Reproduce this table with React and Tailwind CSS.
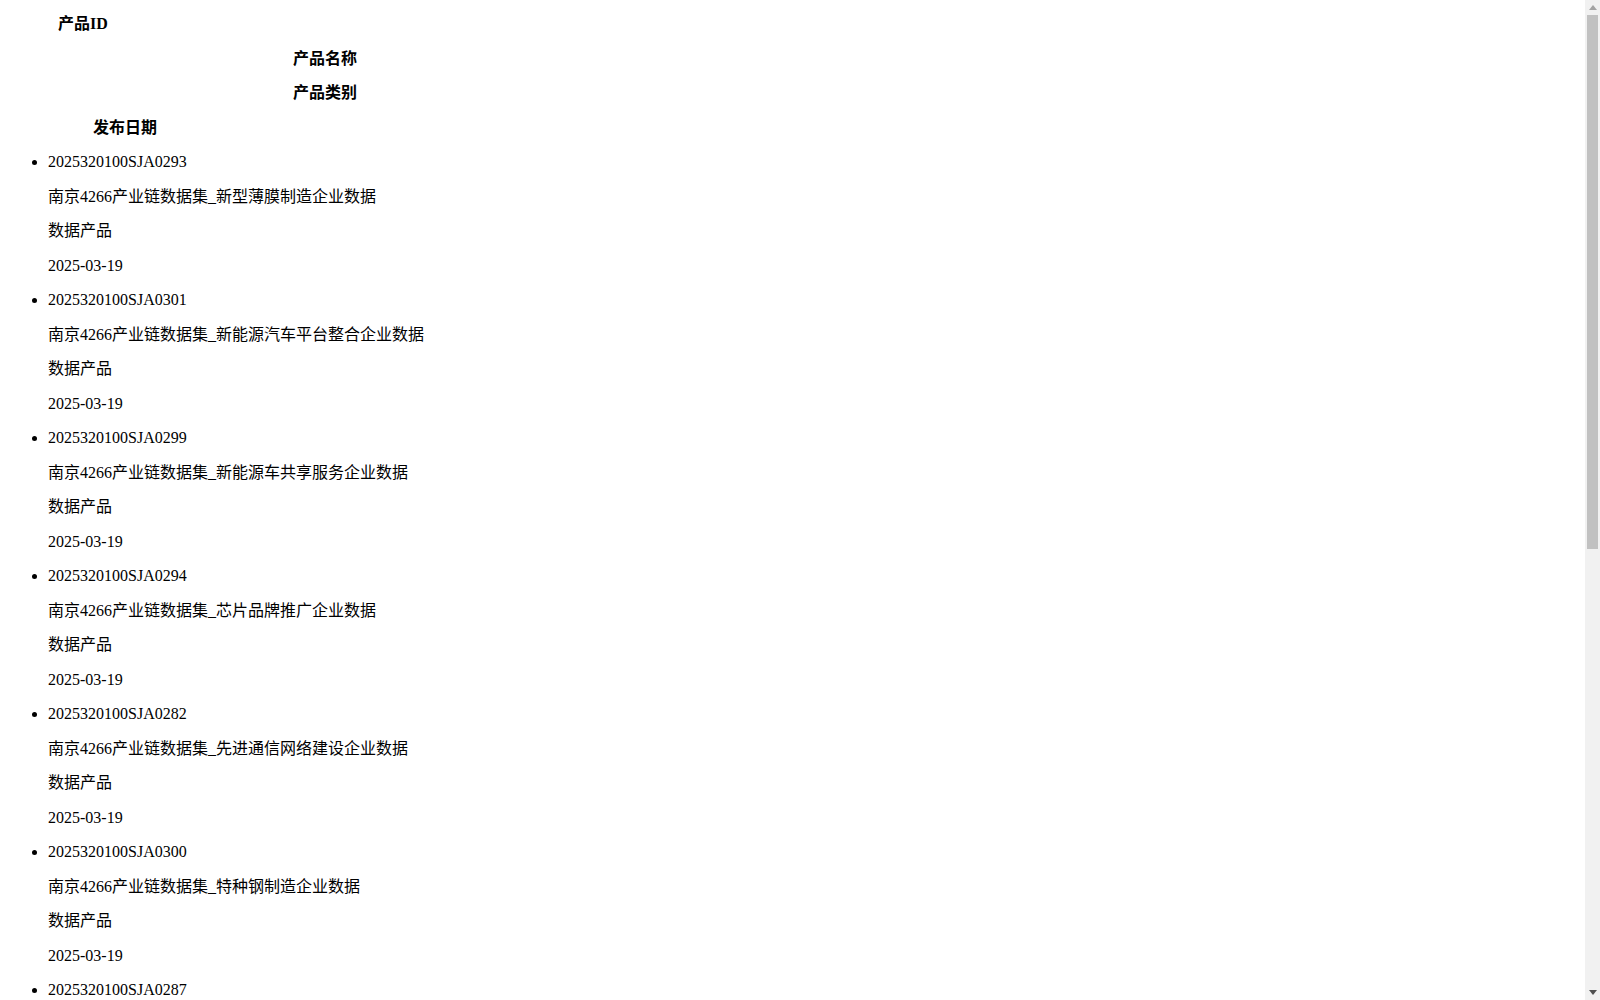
const PRODUCTS = [
    { id: '2025320100SJA0293', name: '南京4266产业链数据集_新型薄膜制造企业数据', type: '数据产品', date: '2025-03-19' },
    { id: '2025320100SJA0301', name: '南京4266产业链数据集_新能源汽车平台整合企业数据', type: '数据产品', date: '2025-03-19' },
    { id: '2025320100SJA0299', name: '南京4266产业链数据集_新能源车共享服务企业数据', type: '数据产品', date: '2025-03-19' },
    { id: '2025320100SJA0294', name: '南京4266产业链数据集_芯片品牌推广企业数据', type: '数据产品', date: '2025-03-19' },
    { id: '2025320100SJA0282', name: '南京4266产业链数据集_先进通信网络建设企业数据', type: '数据产品', date: '2025-03-19' },
    { id: '2025320100SJA0300', name: '南京4266产业链数据集_特种钢制造企业数据', type: '数据产品', date: '2025-03-19' },
    { id: '2025320100SJA0287', name: '南京4266产业链数据集_智能电网设备制造企业数据', type: '数据产品', date: '2025-03-19' },
    { id: '2025320100SJA0290', name: '南京4266产业链数据集_集成电路设计企业数据', type: '数据产品', date: '2025-03-19' },
    { id: '2025320100SJA0285', name: '南京4266产业链数据集_工业软件开发企业数据', type: '数据产品', date: '2025-03-19' },
    { id: '2025320100SJA0296', name: '南京4266产业链数据集_生物医药研发企业数据', type: '数据产品', date: '2025-03-19' },
    { id: '2025320100SJA0288', name: '南京4266产业链数据集_动力电池制造企业数据', type: '数据产品', date: '2025-03-19' },
    { id: '2025320100SJA0297', name: '南京4266产业链数据集_高端装备制造企业数据', type: '数据产品', date: '2025-03-19' },
];

// every row in the page sits on the same line pitch
const ROW = 'h-[34.5px] flex items-center';

function Arrow({ up, color }) {
    return (
        <svg width="8" height="5" viewBox="0 0 8 5">
            <path d={up ? 'M0 5 L4 0 L8 5 Z' : 'M0 0 L8 0 L4 5 Z'} fill={color} />
        </svg>
    );
}

// the window's scrollbar, drawn over the right edge of the page
function Scrollbar() {
    return (
        <div className="fixed top-0 right-0 h-screen w-[15px] bg-[#f1f1f1] flex flex-col">
            <div className="h-[15px] flex items-center justify-center">
                <Arrow up color="#a3a3a3" />
            </div>
            <div className="mx-[2px] h-[534px] bg-[#c1c1c1]" />
            <div className="flex-1" />
            <div className="h-[15px] flex items-center justify-center">
                <Arrow color="#505050" />
            </div>
        </div>
    );
}

export default function App() {
    return (
        <div className="bg-white text-black text-[16px] px-2 pt-[7px] pb-[16px] font-['Liberation_Serif','Noto_Sans_CJK_SC',serif]">
            {/* column headers, centred in their old table widths */}
            <div className="font-bold">
                <div className={`${ROW} justify-center w-[150px]`}>产品ID</div>
                <div className={`${ROW} justify-center w-[634px]`}>产品名称</div>
                <div className={`${ROW} justify-center w-[634px]`}>产品类别</div>
                <div className={`${ROW} justify-center w-[234px]`}>发布日期</div>
            </div>

            <ul className="list-disc pl-[40px]">
                {PRODUCTS.map((p) => (
                    <li key={p.id}>
                        <div className="h-[34.5px] leading-[34.5px]">{p.id}</div>
                        <div className={ROW}>{p.name}</div>
                        <div className={ROW}>{p.type}</div>
                        <div className={ROW}>{p.date}</div>
                    </li>
                ))}
            </ul>

            <Scrollbar />
        </div>
    );
}
